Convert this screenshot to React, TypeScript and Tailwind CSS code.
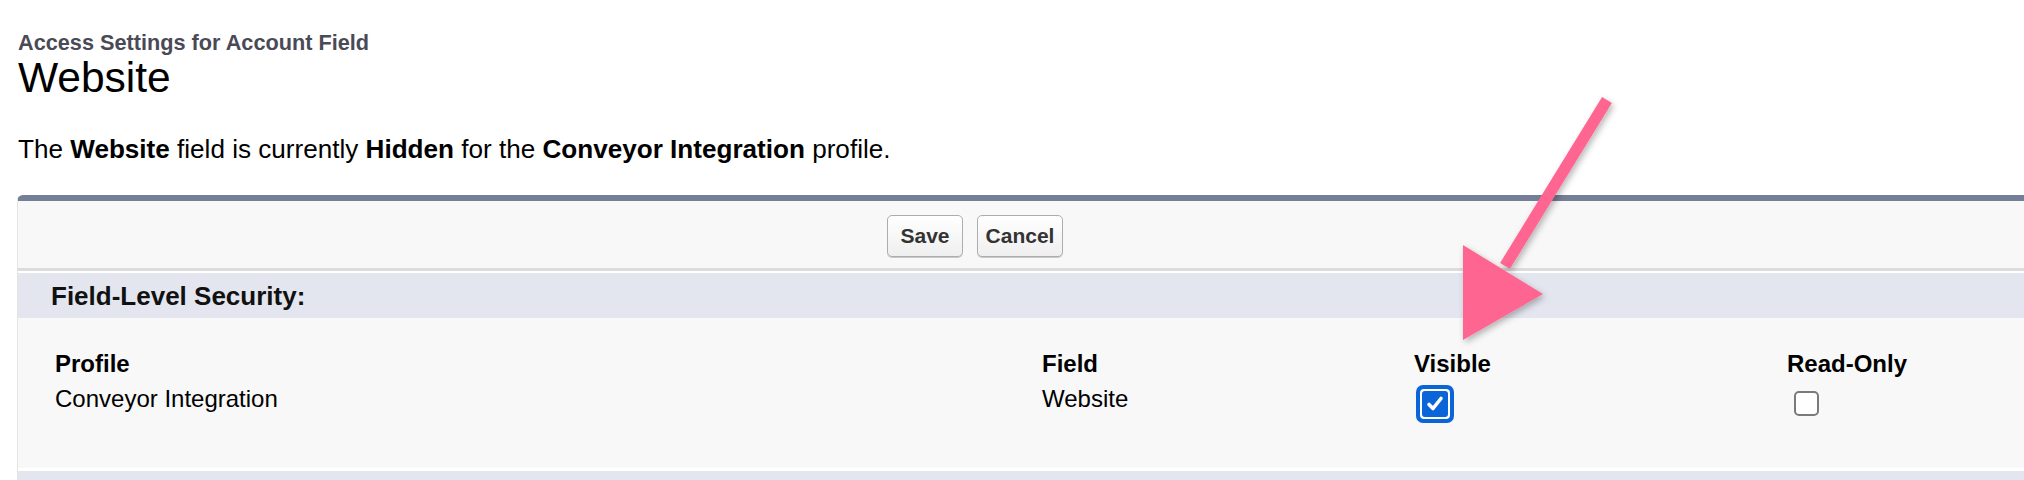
import React from 'react'

// Field-level security page, Salesforce classic look

function CheckedBox() {
  return (
    <div className="ml-[2px] mt-[4px] h-[38px] w-[38px] rounded-[7px] bg-[#0b64d8] p-[4px]">
      <div className="h-full w-full rounded-[4px] bg-white p-[2px]">
        <div className="flex h-full w-full items-center justify-center rounded-[3px] bg-[#0b64d8]">
          <svg width="20" height="20" viewBox="0 0 20 20" fill="none">
            <path d="M4 10.5 L8 14.5 L16 4.5" stroke="white" strokeWidth="3.6" strokeLinecap="round" strokeLinejoin="round" />
          </svg>
        </div>
      </div>
    </div>
  )
}

function EmptyBox() {
  return <div className="ml-[7px] mt-[10px] h-[25px] w-[25px] rounded-[5px] border-2 border-[#7a7a7a] bg-white" />
}

function Arrow() {
  return (
    <svg className="pointer-events-none absolute left-0 top-0" width="2024" height="480" viewBox="0 0 2024 480">
      <defs>
        <filter id="shadow" x="-20%" y="-20%" width="140%" height="140%">
          <feDropShadow dx="2" dy="3" stdDeviation="3" floodColor="#000" floodOpacity="0.28" />
        </filter>
      </defs>
      <g filter="url(#shadow)" fill="#fe6591" stroke="none">
        <line x1="1607" y1="100" x2="1505" y2="266" stroke="#fe6591" strokeWidth="11.5" />
        <polygon points="1463,245 1543,294 1463,340" />
      </g>
    </svg>
  )
}

export default function App() {
  return (
    <div className="relative h-[480px] w-[2024px] overflow-hidden bg-white font-['Liberation_Sans',Arial,sans-serif] text-black">
      <div className="pl-[18px] pt-[32px]">
        <div className="text-[21.7px] font-bold leading-[22px] text-[#4a4a56]">Access Settings for Account Field</div>
        <h1 className="mt-[1px] text-[42.5px] leading-[45px]">Website</h1>
      </div>

      <p className="mt-[34px] pl-[18px] text-[26.1px] leading-[30px]">
        The <b>Website</b> field is currently <b>Hidden</b> for the <b>Conveyor Integration</b> profile.
      </p>

      <div className="ml-[17px] mt-[31px] rounded-tl-[6px] border-l border-t-[6px] border-l-[#e4e4e4] border-t-[#747e96] bg-[#f8f8f8]">
        {/* buttons */}
        <div className="flex h-[67px] items-center pt-[2px]">
          <div className="w-[869px] shrink-0" />
          <div className="flex gap-[14px]">
            <button className="h-[42px] w-[76px] rounded-[5px] border border-[#adadad] bg-gradient-to-b from-white to-[#efefef] text-[21px] font-bold text-[#333] shadow-[0_1px_0_#c9c9c9]">
              Save
            </button>
            <button className="h-[42px] w-[86px] rounded-[5px] border border-[#adadad] bg-gradient-to-b from-white to-[#efefef] text-[21px] font-bold text-[#333] shadow-[0_1px_0_#c9c9c9]">
              Cancel
            </button>
          </div>
        </div>
        <div className="h-[3px] bg-[#dcdcdc]" />
        <div className="h-[2px] bg-white" />

        {/* section header */}
        <div className="flex h-[45px] items-center bg-[#e3e6ef] pl-[33px] text-[26px] font-bold leading-[30px] text-[#111]">
          Field-Level Security:
        </div>

        {/* table */}
        <div className="h-[150px] pl-[37px] pt-[28px] text-[24px] leading-[35px]">
          <div className="grid grid-cols-[987px_372px_373px_1fr] items-start">
            <div className="font-bold">Profile</div>
            <div className="font-bold">Field</div>
            <div className="font-bold">Visible</div>
            <div className="font-bold">Read-Only</div>
            <div>Conveyor Integration</div>
            <div>Website</div>
            <div>
              <CheckedBox />
            </div>
            <div>
              <EmptyBox />
            </div>
          </div>
        </div>
        <div className="h-[3px] bg-white" />
        <div className="h-[20px] bg-[#e3e6ef]" />
      </div>

      <Arrow />
    </div>
  )
}
